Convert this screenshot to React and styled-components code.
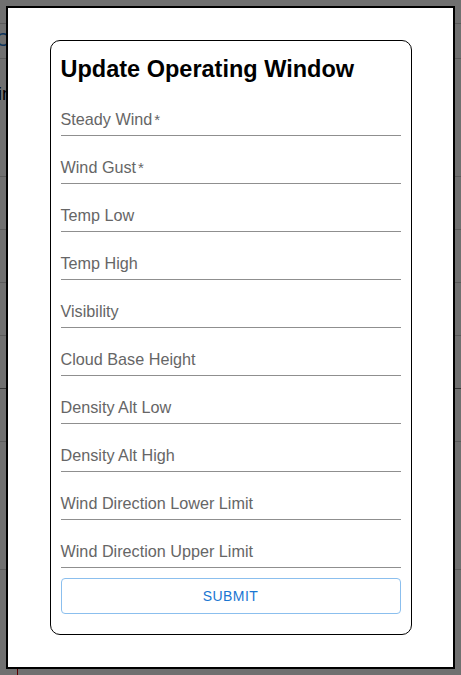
import React from "react";
import styled, { createGlobalStyle } from "styled-components";

const fields = [
  { label: "Steady Wind", required: true },
  { label: "Wind Gust", required: true },
  { label: "Temp Low" },
  { label: "Temp High" },
  { label: "Visibility" },
  { label: "Cloud Base Height" },
  { label: "Density Alt Low" },
  { label: "Density Alt High" },
  { label: "Wind Direction Lower Limit" },
  { label: "Wind Direction Upper Limit" },
];

// rows of the page that sits behind the overlay
const rows = [35, 118, 53, 53, 53, 53, 53, 128, 23];

const App = () => {
  return (
    <>
      <GlobalStyle />
      <Page>
        <TopCell>C</TopCell>
        <SideText>in</SideText>
        {rows.map((h, i) => (
          <PageRow key={i} h={h} dark={i === 6} />
        ))}
        <Mark />
      </Page>
      <Backdrop>
        <Modal>
          <Card>
            <Title>Update Operating Window</Title>
            {fields.map((f) => (
              <Field key={f.label}>
                <Label>
                  {f.label}
                  {f.required && <Star>*</Star>}
                </Label>
              </Field>
            ))}
            <SubmitBtn>SUBMIT</SubmitBtn>
          </Card>
        </Modal>
      </Backdrop>
    </>
  );
};

const GlobalStyle = createGlobalStyle`
  html, body {
    margin: 0;
    padding: 0;
    background: #fff;
    font-family: "Liberation Sans", Arial, sans-serif;
  }
`;

const Page = styled.div`
  width: 100%;
  height: 675px;
  padding-top: 23px;
  box-sizing: border-box;
  position: relative;
  overflow: hidden;
`;

const PageRow = styled.div`
  height: ${(p) => p.h}px;
  border-top: 1px solid ${(p) => (p.dark ? "#777" : "#cfcfcf")};
  box-sizing: border-box;
`;

const TopCell = styled.div`
  position: absolute;
  left: -4px;
  top: 30px;
  color: #1976d2;
  font-size: 18px;
`;

const SideText = styled.div`
  position: absolute;
  left: -2px;
  top: 84px;
  color: #000;
  font-size: 18px;
`;

const Mark = styled.div`
  position: absolute;
  left: 17px;
  top: 668px;
  width: 1px;
  height: 10px;
  background: #c00;
`;

const Backdrop = styled.div`
  position: fixed;
  inset: 0;
  background: rgba(0, 0, 0, 0.56);
  display: flex;
  align-items: flex-start;
  justify-content: flex-start;
  padding: 6px;
`;

const Modal = styled.div`
  width: 451px;
  height: 663px;
  box-sizing: border-box;
  background: #fff;
  border: 2px solid #000;
  display: flex;
  align-items: center;
  justify-content: center;
`;

const Card = styled.div`
  width: 362px;
  box-sizing: border-box;
  border: 1px solid #000;
  border-radius: 10px;
  padding: 13px 10px 20px 10px;
  display: flex;
  flex-direction: column;
`;

const Title = styled.h2`
  margin: 0;
  font-size: 23.5px;
  line-height: 30px;
  font-weight: bold;
  color: #000;
  height: 34px;
`;

const Field = styled.div`
  height: 48px;
  display: flex;
  align-items: flex-end;
  padding-bottom: 6px;
  box-sizing: border-box;
  border-bottom: 1px solid #8f8f8f;
`;

const Label = styled.span`
  font-size: 16.2px;
  line-height: 19px;
  color: #666;
`;

const Star = styled.span`
  margin-left: 2px;
  font-size: 15px;
`;

const SubmitBtn = styled.button`
  margin-top: 10px;
  height: 36px;
  border: 1px solid #8bbfee;
  border-radius: 4px;
  background: #fff;
  color: #1976d2;
  font-family: "Liberation Sans", Arial, sans-serif;
  font-size: 14px;
  letter-spacing: 0.4px;
  cursor: pointer;
`;

export default App;
